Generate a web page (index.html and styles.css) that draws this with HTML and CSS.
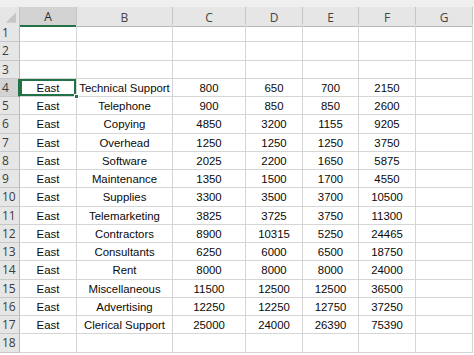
FILE: index.html
```html
<!DOCTYPE html>
<html>
<head>
<meta charset="utf-8">
<link rel="stylesheet" href="styles.css">
</head>
<body>
<div class="sheet">
  <div class="topband"></div>
  <div class="row head">
    <div class="corner"><svg width="20" height="17" viewBox="0 0 20 17"><polygon points="17,4 17,15 6,15" fill="#c6c6c6"/></svg></div>
    <div class="ch sel">A</div><div class="ch">B</div><div class="ch">C</div><div class="ch">D</div><div class="ch">E</div><div class="ch">F</div><div class="ch">G</div>
  </div>
  <div class="row"><div class="rh">1</div><div class="c"></div><div class="c"></div><div class="c"></div><div class="c"></div><div class="c"></div><div class="c"></div><div class="c"></div></div>
  <div class="row"><div class="rh">2</div><div class="c"></div><div class="c"></div><div class="c"></div><div class="c"></div><div class="c"></div><div class="c"></div><div class="c"></div></div>
  <div class="row"><div class="rh">3</div><div class="c"></div><div class="c"></div><div class="c"></div><div class="c"></div><div class="c"></div><div class="c"></div><div class="c"></div></div>
  <div class="row"><div class="rh sel">4</div><div class="c active">East<span class="handle"></span></div><div class="c">Technical Support</div><div class="c">800</div><div class="c">650</div><div class="c">700</div><div class="c">2150</div><div class="c"></div></div>
  <div class="row"><div class="rh">5</div><div class="c">East</div><div class="c">Telephone</div><div class="c">900</div><div class="c">850</div><div class="c">850</div><div class="c">2600</div><div class="c"></div></div>
  <div class="row"><div class="rh">6</div><div class="c">East</div><div class="c">Copying</div><div class="c">4850</div><div class="c">3200</div><div class="c">1155</div><div class="c">9205</div><div class="c"></div></div>
  <div class="row"><div class="rh">7</div><div class="c">East</div><div class="c">Overhead</div><div class="c">1250</div><div class="c">1250</div><div class="c">1250</div><div class="c">3750</div><div class="c"></div></div>
  <div class="row"><div class="rh">8</div><div class="c">East</div><div class="c">Software</div><div class="c">2025</div><div class="c">2200</div><div class="c">1650</div><div class="c">5875</div><div class="c"></div></div>
  <div class="row"><div class="rh">9</div><div class="c">East</div><div class="c">Maintenance</div><div class="c">1350</div><div class="c">1500</div><div class="c">1700</div><div class="c">4550</div><div class="c"></div></div>
  <div class="row"><div class="rh">10</div><div class="c">East</div><div class="c">Supplies</div><div class="c">3300</div><div class="c">3500</div><div class="c">3700</div><div class="c">10500</div><div class="c"></div></div>
  <div class="row"><div class="rh">11</div><div class="c">East</div><div class="c">Telemarketing</div><div class="c">3825</div><div class="c">3725</div><div class="c">3750</div><div class="c">11300</div><div class="c"></div></div>
  <div class="row"><div class="rh">12</div><div class="c">East</div><div class="c">Contractors</div><div class="c">8900</div><div class="c">10315</div><div class="c">5250</div><div class="c">24465</div><div class="c"></div></div>
  <div class="row"><div class="rh">13</div><div class="c">East</div><div class="c">Consultants</div><div class="c">6250</div><div class="c">6000</div><div class="c">6500</div><div class="c">18750</div><div class="c"></div></div>
  <div class="row"><div class="rh">14</div><div class="c">East</div><div class="c">Rent</div><div class="c">8000</div><div class="c">8000</div><div class="c">8000</div><div class="c">24000</div><div class="c"></div></div>
  <div class="row"><div class="rh">15</div><div class="c">East</div><div class="c">Miscellaneous</div><div class="c">11500</div><div class="c">12500</div><div class="c">12500</div><div class="c">36500</div><div class="c"></div></div>
  <div class="row"><div class="rh">16</div><div class="c">East</div><div class="c">Advertising</div><div class="c">12250</div><div class="c">12250</div><div class="c">12750</div><div class="c">37250</div><div class="c"></div></div>
  <div class="row"><div class="rh">17</div><div class="c">East</div><div class="c">Clerical Support</div><div class="c">25000</div><div class="c">24000</div><div class="c">26390</div><div class="c">75390</div><div class="c"></div></div>
  <div class="row"><div class="rh">18</div><div class="c"></div><div class="c"></div><div class="c"></div><div class="c"></div><div class="c"></div><div class="c"></div><div class="c"></div></div>
</div>
</body>
</html>
```
FILE: styles.css
```css
html, body {
  margin: 0;
  padding: 0;
  background: #ffffff;
}
body {
  width: 474px;
  height: 355px;
  overflow: hidden;
}
.sheet {
  display: flex;
  flex-direction: column;
  font-family: "Liberation Sans", Arial, sans-serif;
}
.topband {
  height: 7px;
  background: #efefef;
}
.row {
  display: grid;
  grid-template-columns: 20px 57px 96px 73px 57px 56px 57px 57px;
  height: 18.25px;
}
.row.head {
  height: 17px;
}
.row > div {
  box-sizing: border-box;
  border-right: 1px solid #d6d6d6;
  border-bottom: 1px solid #d6d6d6;
  display: flex;
  align-items: center;
  justify-content: center;
  overflow: visible;
  white-space: nowrap;
}
.corner {
  background: #e6e6e6;
  border-color: #c4c4c4 !important;
  padding: 0 !important;
}
.corner svg { display: block; }
.ch {
  background: #e6e6e6;
  border-right-color: #c4c4c4 !important;
  border-bottom-color: #b8b8b8 !important;
  font-family: "Open Sans", "Noto Sans", sans-serif;
  font-size: 12px;
  color: #444444;
  padding-top: 1px;
}
.ch.sel {
  background: #d3d3d3;
  border-bottom: 2px solid #217346 !important;
  color: #2a2a2a;
}
.rh {
  background: #e6e6e6;
  border-right-color: #b8b8b8 !important;
  border-bottom-color: #c8c8c8 !important;
  font-family: "Open Sans", "Noto Sans", sans-serif;
  font-size: 12px;
  color: #3c3c3c;
  justify-content: flex-start !important;
  padding-left: 2px;
}
.rh.sel {
  background: #d3d3d3;
  border-right: 2px solid #217346 !important;
}
.c {
  font-size: 11.4px;
  color: #0a0a0a;
  padding-top: 1px;
}
.c.active {
  position: relative;
  box-shadow: inset 0 0 0 2px #217346;
}
.handle {
  position: absolute;
  right: -3px;
  bottom: -3px;
  width: 5px;
  height: 5px;
  background: #217346;
  border: 1px solid #ffffff;
  box-sizing: border-box;
}
```
